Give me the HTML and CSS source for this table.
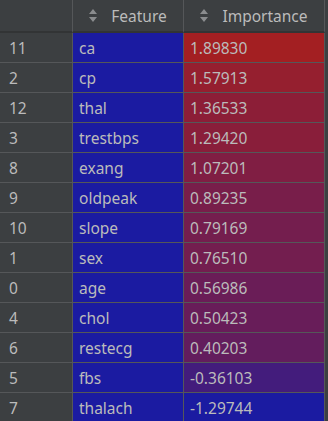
FILE: index.html
```html
<!DOCTYPE html>
<html lang="en">
<head>
    <meta charset="UTF-8">
    <title>Feature Importance</title>
    <link rel="stylesheet" href="styles.css">
</head>
<body>
    <div class="grid" id="grid">
        <div class="row head">
            <div class="cell idx"></div>
            <div class="cell th">
                <svg class="sort" width="8" height="13" viewBox="0 0 8 13"><path d="M4 0 L8 5 L0 5 Z M0 8 L8 8 L4 13 Z"/></svg>
                <span>Feature</span>
            </div>
            <div class="cell th">
                <svg class="sort" width="8" height="13" viewBox="0 0 8 13"><path d="M4 0 L8 5 L0 5 Z M0 8 L8 8 L4 13 Z"/></svg>
                <span>Importance</span>
            </div>
        </div>
    </div>

    <script>
        const data = [
            [11, 'ca', '1.89830'],
            [2, 'cp', '1.57913'],
            [12, 'thal', '1.36533'],
            [3, 'trestbps', '1.29420'],
            [8, 'exang', '1.07201'],
            [9, 'oldpeak', '0.89235'],
            [10, 'slope', '0.79169'],
            [1, 'sex', '0.76510'],
            [0, 'age', '0.56986'],
            [4, 'chol', '0.50423'],
            [6, 'restecg', '0.40203'],
            [5, 'fbs', '-0.36103'],
            [7, 'thalach', '-1.29744']
        ];

        // low values are blue, high values are red
        const low = [27, 27, 161];
        const high = [163, 31, 34];
        const vals = data.map(d => parseFloat(d[2]));
        const min = Math.min(...vals);
        const max = Math.max(...vals);

        function colorFor(v) {
            const t = (v - min) / (max - min);
            const c = low.map((l, i) => Math.round(l + (high[i] - l) * t));
            return `rgb(${c[0]}, ${c[1]}, ${c[2]})`;
        }

        const grid = document.getElementById('grid');
        data.forEach(([idx, name, value]) => {
            const row = document.createElement('div');
            row.className = 'row';
            row.innerHTML = `
                <div class="cell idx">${idx}</div>
                <div class="cell feat">${name}</div>
                <div class="cell val" style="background-color: ${colorFor(parseFloat(value))}">${value}</div>
            `;
            grid.appendChild(row);
        });
    </script>
</body>
</html>
```

FILE: styles.css
```css
body {
    margin: 0;
    background-color: #3c3f41;
    font-family: "Noto Sans", sans-serif;
    font-size: 15.5px;
    color: #bbbbbb;
}
.grid {
    width: 325px;
}
.row {
    display: grid;
    grid-template-columns: 73px 111px 141px;
    height: 30px;
}
.row.head {
    height: 33px;
}
.cell {
    box-sizing: border-box;
    border-right: 1px solid #555759;
    border-bottom: 1px solid #555759;
    display: flex;
    align-items: center;
    padding-left: 9px;
    white-space: nowrap;
}
.head .cell {
    border-bottom: 2px solid #323435;
}
.th {
    justify-content: center;
    padding-left: 0;
    gap: 14px;
}
.sort {
    fill: #8a8c8e;
}
.feat {
    background-color: #1b1ba1;
    padding-left: 6px;
}
.val {
    padding-left: 6px;
}
```
